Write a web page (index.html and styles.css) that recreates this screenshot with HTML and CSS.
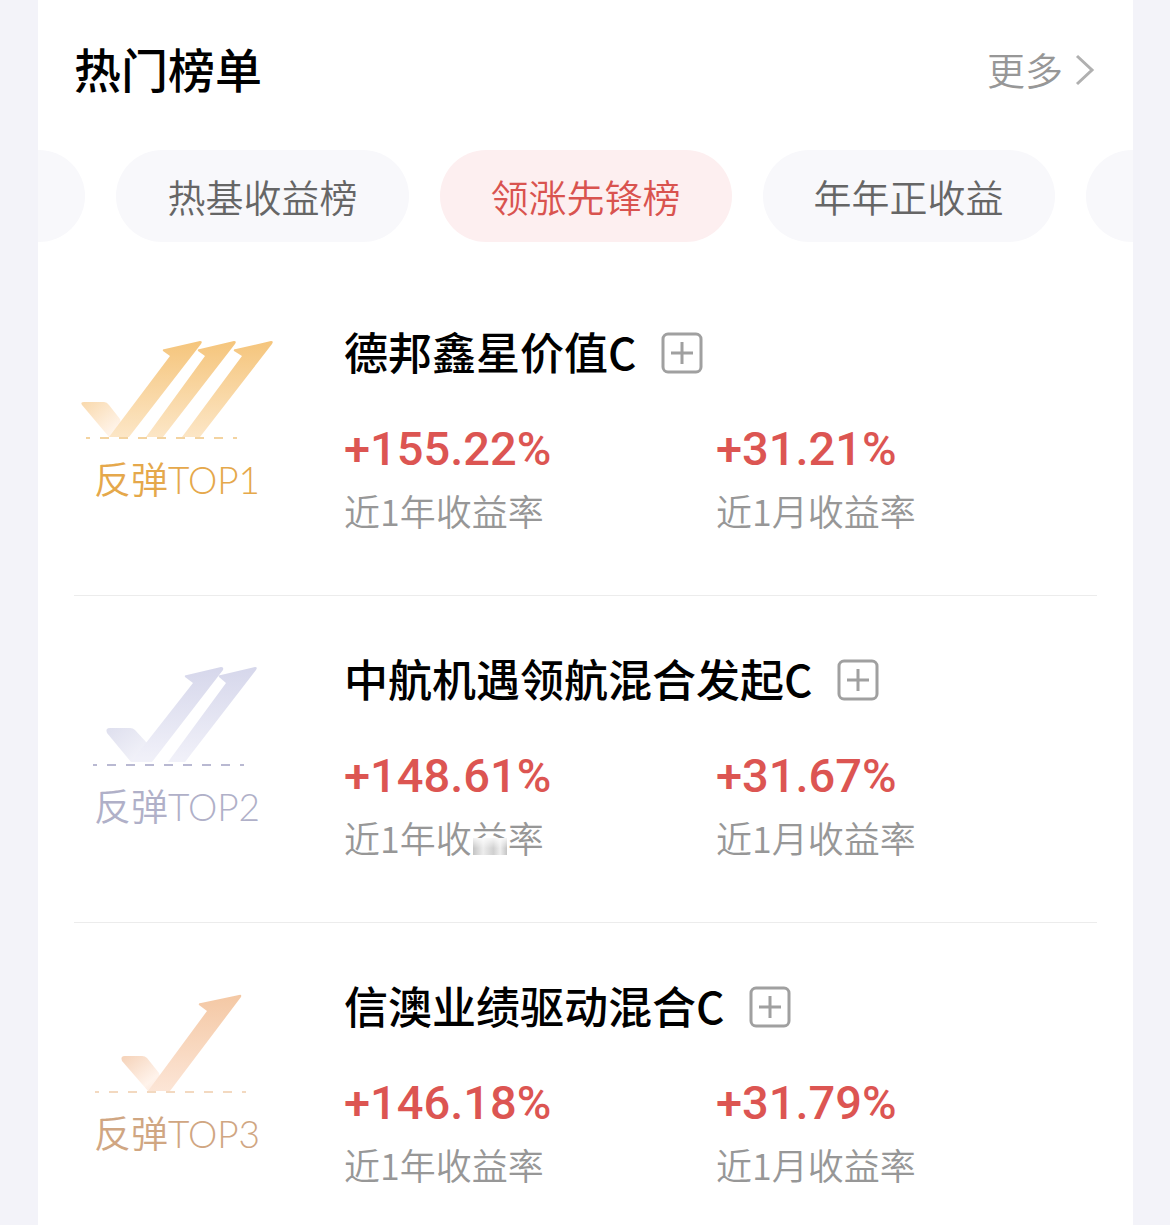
FILE: index.html
```html
<!DOCTYPE html>
<html lang="zh-CN">

<head>
    <meta charset="UTF-8" />
    <meta name="viewport" content="width=device-width, initial-scale=1.0" />
    <title>热门榜单</title>
    <link rel="stylesheet" href="styles.css">
</head>

<body>
    <main class="card">
        <header class="card-header">
            <h1>热门榜单</h1>
            <a href="#" class="more">更多
                <svg width="20" height="32" viewBox="0 0 20 32" fill="none" stroke="#b0b0b0" stroke-width="3">
                    <path d="M2 2L17 16L2 30" />
                </svg>
            </a>
        </header>

        <nav class="tabs">
            <button type="button" class="tab tab-edge" aria-label="上一个"></button>
            <button type="button" class="tab">热基收益榜</button>
            <button type="button" class="tab active">领涨先锋榜</button>
            <button type="button" class="tab">年年正收益</button>
            <button type="button" class="tab tab-edge" aria-label="下一个"></button>
        </nav>

        <section class="fund">
            <div class="rank gold">
                <svg width="212" height="112" viewBox="0 0 212 112">
                    <defs>
                        <linearGradient id="gold" x1="0" y1="1" x2="0" y2="0">
                            <stop offset="0" stop-color="#fce6c6" />
                            <stop offset="1" stop-color="#f5c57c" />
                        </linearGradient>
                        <linearGradient id="gold-tick" x1="0" y1="0" x2="1" y2="1">
                            <stop offset="0" stop-color="#f9d9ac" />
                            <stop offset="0.8" stop-color="#fff4ea" />
                            <stop offset="1" stop-color="#fde9cf" />
                        </linearGradient>
                    </defs>
                    <path fill="url(#gold-tick)" d="M10 68H30Q33 68 35 71L46 85L50 103H35L8 71Q6 68 10 68Z" />
                    <path fill="url(#gold)" d="M35 103L96 22L89 17Q88 15 91 15L126 7Q129 7 127 10L55 103Z" />
                    <path fill="url(#gold)" d="M72 103L131 22L124 17Q123 15 126 15L160 7Q163 7 161 10L89 103Z" />
                    <path fill="url(#gold)" d="M108 103L168 22L160 17Q159 15 162 15L197 7Q200 7 198 10L126 103Z" />
                    <path stroke="#f3d3a0" stroke-width="2" stroke-dasharray="9 10" stroke-dashoffset="5" d="M12 104H163" />
                </svg>
                <p>反弹TOP1</p>
            </div>
            <div class="info">
                <div class="name">
                    <h2>德邦鑫星价值C</h2>
                    <button type="button" class="add" aria-label="添加">
                        <svg width="42" height="42" viewBox="0 0 42 42" fill="none" stroke="#a0a0a0" stroke-width="3">
                            <rect x="2" y="2" width="38" height="38" rx="5" />
                            <path d="M21 10V32M10 21H32" />
                        </svg>
                    </button>
                </div>
                <dl class="stats">
                    <div class="stat">
                        <dd>+155.22%</dd>
                        <dt>近1年收益率</dt>
                    </div>
                    <div class="stat">
                        <dd>+31.21%</dd>
                        <dt>近1月收益率</dt>
                    </div>
                </dl>
            </div>
        </section>

        <section class="fund">
            <div class="rank silver">
                <svg width="212" height="112" viewBox="0 0 212 112">
                    <defs>
                        <linearGradient id="silver" x1="0" y1="1" x2="0" y2="0">
                            <stop offset="0" stop-color="#f1f1f9" />
                            <stop offset="1" stop-color="#d6d7eb" />
                        </linearGradient>
                        <linearGradient id="silver-tick" x1="0" y1="0" x2="1" y2="1">
                            <stop offset="0" stop-color="#dedfee" />
                            <stop offset="1" stop-color="#f6f6fb" />
                        </linearGradient>
                    </defs>
                    <path fill="url(#silver-tick)" d="M36 67H56Q59 67 61 69L73 82L76 101H57L33 72Q31 67 36 67Z" />
                    <path fill="url(#silver)" d="M57 101L119 22L111 16Q110 14 113 14L147 6Q150 6 149 9L78 101Z" />
                    <path fill="url(#silver)" d="M94 101L152 22L145 16Q144 14 147 14L181 6Q184 6 182 9L111 101Z" />
                    <path stroke="#b9b9d2" stroke-width="2" stroke-dasharray="9 10" stroke-dashoffset="5" d="M19 104H170" />
                </svg>
                <p>反弹TOP2</p>
            </div>
            <div class="info">
                <div class="name">
                    <h2>中航机遇领航混合发起C</h2>
                    <button type="button" class="add" aria-label="添加">
                        <svg width="42" height="42" viewBox="0 0 42 42" fill="none" stroke="#a0a0a0" stroke-width="3">
                            <rect x="2" y="2" width="38" height="38" rx="5" />
                            <path d="M21 10V32M10 21H32" />
                        </svg>
                    </button>
                </div>
                <dl class="stats">
                    <div class="stat">
                        <dd>+148.61%</dd>
                        <dt>近1年收<span class="smudge">益</span>率</dt>
                    </div>
                    <div class="stat">
                        <dd>+31.67%</dd>
                        <dt>近1月收益率</dt>
                    </div>
                </dl>
            </div>
        </section>

        <section class="fund">
            <div class="rank bronze">
                <svg width="212" height="112" viewBox="0 0 212 112">
                    <defs>
                        <linearGradient id="bronze" x1="0" y1="1" x2="0" y2="0">
                            <stop offset="0" stop-color="#fce5d6" />
                            <stop offset="1" stop-color="#f4c8a4" />
                        </linearGradient>
                        <linearGradient id="bronze-tick" x1="0" y1="0" x2="1" y2="1">
                            <stop offset="0" stop-color="#f5d2b8" />
                            <stop offset="0.7" stop-color="#fff3eb" />
                            <stop offset="1" stop-color="#fce5d6" />
                        </linearGradient>
                    </defs>
                    <path fill="url(#bronze-tick)" d="M51 68H68Q71 68 73 70L85 85L90 103H74L48 73Q46 68 51 68Z" />
                    <path fill="url(#bronze)" d="M74 103L133 23L125 17Q124 15 127 15L165 7Q168 6 167 9L96 103Z" />
                    <path stroke="#f3d9c0" stroke-width="2" stroke-dasharray="9 10" stroke-dashoffset="5" d="M21 104H172" />
                </svg>
                <p>反弹TOP3</p>
            </div>
            <div class="info">
                <div class="name">
                    <h2>信澳业绩驱动混合C</h2>
                    <button type="button" class="add" aria-label="添加">
                        <svg width="42" height="42" viewBox="0 0 42 42" fill="none" stroke="#a0a0a0" stroke-width="3">
                            <rect x="2" y="2" width="38" height="38" rx="5" />
                            <path d="M21 10V32M10 21H32" />
                        </svg>
                    </button>
                </div>
                <dl class="stats">
                    <div class="stat">
                        <dd>+146.18%</dd>
                        <dt>近1年收益率</dt>
                    </div>
                    <div class="stat">
                        <dd>+31.79%</dd>
                        <dt>近1月收益率</dt>
                    </div>
                </dl>
            </div>
        </section>
    </main>
</body>

</html>
```
FILE: styles.css
```css
* {
    box-sizing: border-box;
    margin: 0;
    padding: 0;
}

body {
    font-family: "Noto Sans CJK SC", sans-serif;
    background-color: #f3f3f9;
    padding: 0 37px 0 38px;
}

button {
    font-family: inherit;
    border: none;
    background: none;
    cursor: pointer;
}

svg {
    display: block;
}

.card {
    background-color: white;
}

.card-header {
    display: flex;
    justify-content: space-between;
    align-items: center;
    padding: 33px 38px 47px 36px;
}

.card-header h1 {
    font-size: 47px;
    font-weight: 500;
    line-height: 70px;
    color: black;
}

.more {
    display: flex;
    align-items: center;
    gap: 12px;
    font-size: 38px;
    font-weight: 350;
    color: #979797;
    text-decoration: none;
}

.more svg {
    margin-top: 4px;
}

.tabs {
    display: flex;
    justify-content: center;
    gap: 31px;
    overflow: hidden;
}

.tab {
    flex-shrink: 0;
    height: 92px;
    padding: 0 51px 2px;
    border-radius: 46px;
    background-color: #f8f8fb;
    font-size: 38px;
    font-weight: 350;
    color: #666;
}

.tab-edge {
    width: 292px;
}

.tab.active {
    background-color: #fdeff0;
    color: #d9534f;
}

.fund {
    display: flex;
    margin: 0 36px;
    padding: 54px 0 57px;
    border-bottom: 1px solid #ececec;
}

.tabs + .fund {
    margin-top: 27px;
}

.fund:last-child {
    border-bottom: none;
    padding-bottom: 33px;
}

.rank {
    width: 270px;
    padding-top: 11px;
}

.rank p {
    padding: 9px 0 0 20px;
    font-family: Lato, "Noto Sans CJK SC", sans-serif;
    font-size: 37px;
    font-weight: 350;
    line-height: 50px;
}

.gold p {
    color: #e5a84b;
}

.silver p {
    color: #b0b0c8;
}

.bronze p {
    color: #d0a682;
}

.info {
    flex: 1;
}

.name {
    display: flex;
    align-items: center;
    gap: 25px;
}

.name h2 {
    padding-bottom: 4px;
    font-size: 44px;
    font-weight: 500;
    line-height: 56px;
    color: black;
}

.stats {
    display: flex;
    padding-top: 36px;
}

.stat {
    width: 372px;
}

.stat dd {
    font-family: Roboto, sans-serif;
    font-size: 47px;
    font-weight: 500;
    line-height: 60px;
    color: #dc5552;
}

.stat dt {
    padding: 6px 0 3px;
    font-size: 36px;
    font-weight: 350;
    line-height: 50px;
    color: #979797;
}

.smudge {
    position: relative;
}

/* grey patch over the lower half of the character */
.smudge::after {
    content: "";
    position: absolute;
    left: 1px;
    right: 1px;
    bottom: 8px;
    height: 17px;
    background:
        linear-gradient(to bottom, rgba(255, 255, 255, 0.8), rgba(255, 255, 255, 0) 60%),
        linear-gradient(to right, #c4c4c4, #ededed 30%, #d0d0d0 60%, #eeeeee 80%, #c4c4c4);
}
```
